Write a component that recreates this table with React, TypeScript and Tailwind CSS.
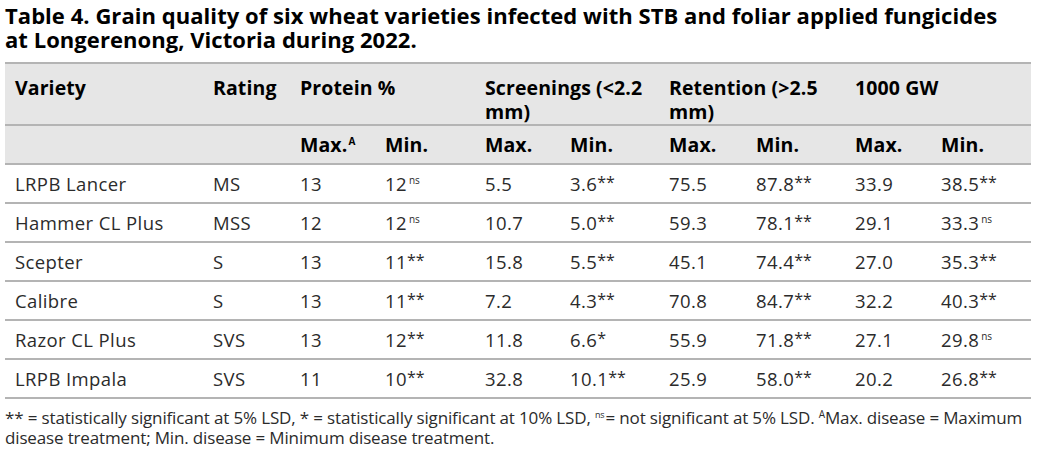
import React from 'react';

type Row = {
  variety: string;
  rating: string;
  cells: [string, string][];
};

const rows: Row[] = [
  { variety: 'LRPB Lancer', rating: 'MS', cells: [['13', ''], ['12', 'ns'], ['5.5', ''], ['3.6', '**'], ['75.5', ''], ['87.8', '**'], ['33.9', ''], ['38.5', '**']] },
  { variety: 'Hammer CL Plus', rating: 'MSS', cells: [['12', ''], ['12', 'ns'], ['10.7', ''], ['5.0', '**'], ['59.3', ''], ['78.1', '**'], ['29.1', ''], ['33.3', 'ns']] },
  { variety: 'Scepter', rating: 'S', cells: [['13', ''], ['11', '**'], ['15.8', ''], ['5.5', '**'], ['45.1', ''], ['74.4', '**'], ['27.0', ''], ['35.3', '**']] },
  { variety: 'Calibre', rating: 'S', cells: [['13', ''], ['11', '**'], ['7.2', ''], ['4.3', '**'], ['70.8', ''], ['84.7', '**'], ['32.2', ''], ['40.3', '**']] },
  { variety: 'Razor CL Plus', rating: 'SVS', cells: [['13', ''], ['12', '**'], ['11.8', ''], ['6.6', '*'], ['55.9', ''], ['71.8', '**'], ['27.1', ''], ['29.8', 'ns']] },
  { variety: 'LRPB Impala', rating: 'SVS', cells: [['11', ''], ['10', '**'], ['32.8', ''], ['10.1', '**'], ['25.9', ''], ['58.0', '**'], ['20.2', ''], ['26.8', '**']] },
];

// significance marks: stars sit a bit high, "ns" is tiny superscript
const Mark = ({ m }: { m: string }) => {
  if (!m) return null;
  if (m === 'ns') return <sup className="text-[10px] tracking-normal ml-[2px] -top-[7px]">ns</sup>;
  return <span className="relative -top-[3px] text-[16px] tracking-normal">{m}</span>;
};

const colWidths = [198, 87, 85, 100, 85, 99, 87, 99, 86, 100];

export default function App() {
  return (
    <div className="w-[1041px] h-[460px] bg-white px-[5px] pt-[3px] text-[#2b2b2b] font-['Open_Sans',sans-serif]">
      <h1 className="text-[22px] leading-[24px] font-bold text-black tracking-[0.05px]">
        Table 4. Grain quality of six wheat varieties infected with STB and foliar applied fungicides
        <br />
        at Longerenong, Victoria during 2022.
      </h1>

      <table className="mt-[11px] w-[1026px] border-collapse table-fixed border-t-2 border-[#b4b4b4] text-[18.5px] tracking-[0.4px]">
        <colgroup>
          {colWidths.map((w, i) => (
            <col key={i} style={{ width: w }} />
          ))}
        </colgroup>
        <thead className="bg-[#e6e6e6] text-black font-bold text-[19.5px] tracking-[0.1px]">
          <tr className="border-b-2 border-[#b4b4b4] h-[61px] align-top">
            <th className="text-left font-bold pl-[10px] pt-[12px] leading-[24px]">Variety</th>
            <th className="text-left font-bold pl-[10px] pt-[12px] leading-[24px]">Rating</th>
            <th colSpan={2} className="text-left font-bold pl-[10px] pt-[12px] leading-[24px]">Protein %</th>
            <th colSpan={2} className="text-left font-bold pl-[10px] pr-[4px] pt-[12px] leading-[24px]">Screenings (&lt;2.2 mm)</th>
            <th colSpan={2} className="text-left font-bold pl-[10px] pr-[12px] pt-[12px] leading-[24px]">Retention (&gt;2.5 mm)</th>
            <th colSpan={2} className="text-left font-bold pl-[10px] pt-[12px] leading-[24px]">1000 GW</th>
          </tr>
          <tr className="border-b-2 border-[#b4b4b4] h-[39px]">
            <th></th>
            <th></th>
            <th className="text-left font-bold pl-[10px]">
              Max.<sup className="text-[10px] ml-px -top-[7px]">A</sup>
            </th>
            <th className="text-left font-bold pl-[10px]">Min.</th>
            <th className="text-left font-bold pl-[10px]">Max.</th>
            <th className="text-left font-bold pl-[10px]">Min.</th>
            <th className="text-left font-bold pl-[10px]">Max.</th>
            <th className="text-left font-bold pl-[10px]">Min.</th>
            <th className="text-left font-bold pl-[10px]">Max.</th>
            <th className="text-left font-bold pl-[10px]">Min.</th>
          </tr>
        </thead>
        <tbody>
          {rows.map((r) => (
            <tr key={r.variety} className="border-b-2 border-[#b4b4b4] h-[39px]">
              <td className="pl-[10px]">{r.variety}</td>
              <td className="pl-[10px]">{r.rating}</td>
              {r.cells.map(([v, m], i) => (
                <td key={i} className="pl-[10px] whitespace-nowrap">
                  {v}
                  <Mark m={m} />
                </td>
              ))}
            </tr>
          ))}
        </tbody>
      </table>

      <p className="mt-[9px] text-[17px] leading-[20px] tracking-[-0.15px]">
        ** = statistically significant at 5% LSD, * = statistically significant at 10% LSD,{' '}
        <sup className="text-[9px] -top-[6px] mr-[1px]">ns</sup>= not significant at 5% LSD.{' '}
        <sup className="text-[10px] -top-[6px]">A</sup>Max. disease = Maximum disease treatment; Min. disease = Minimum disease treatment.
      </p>
    </div>
  );
}
